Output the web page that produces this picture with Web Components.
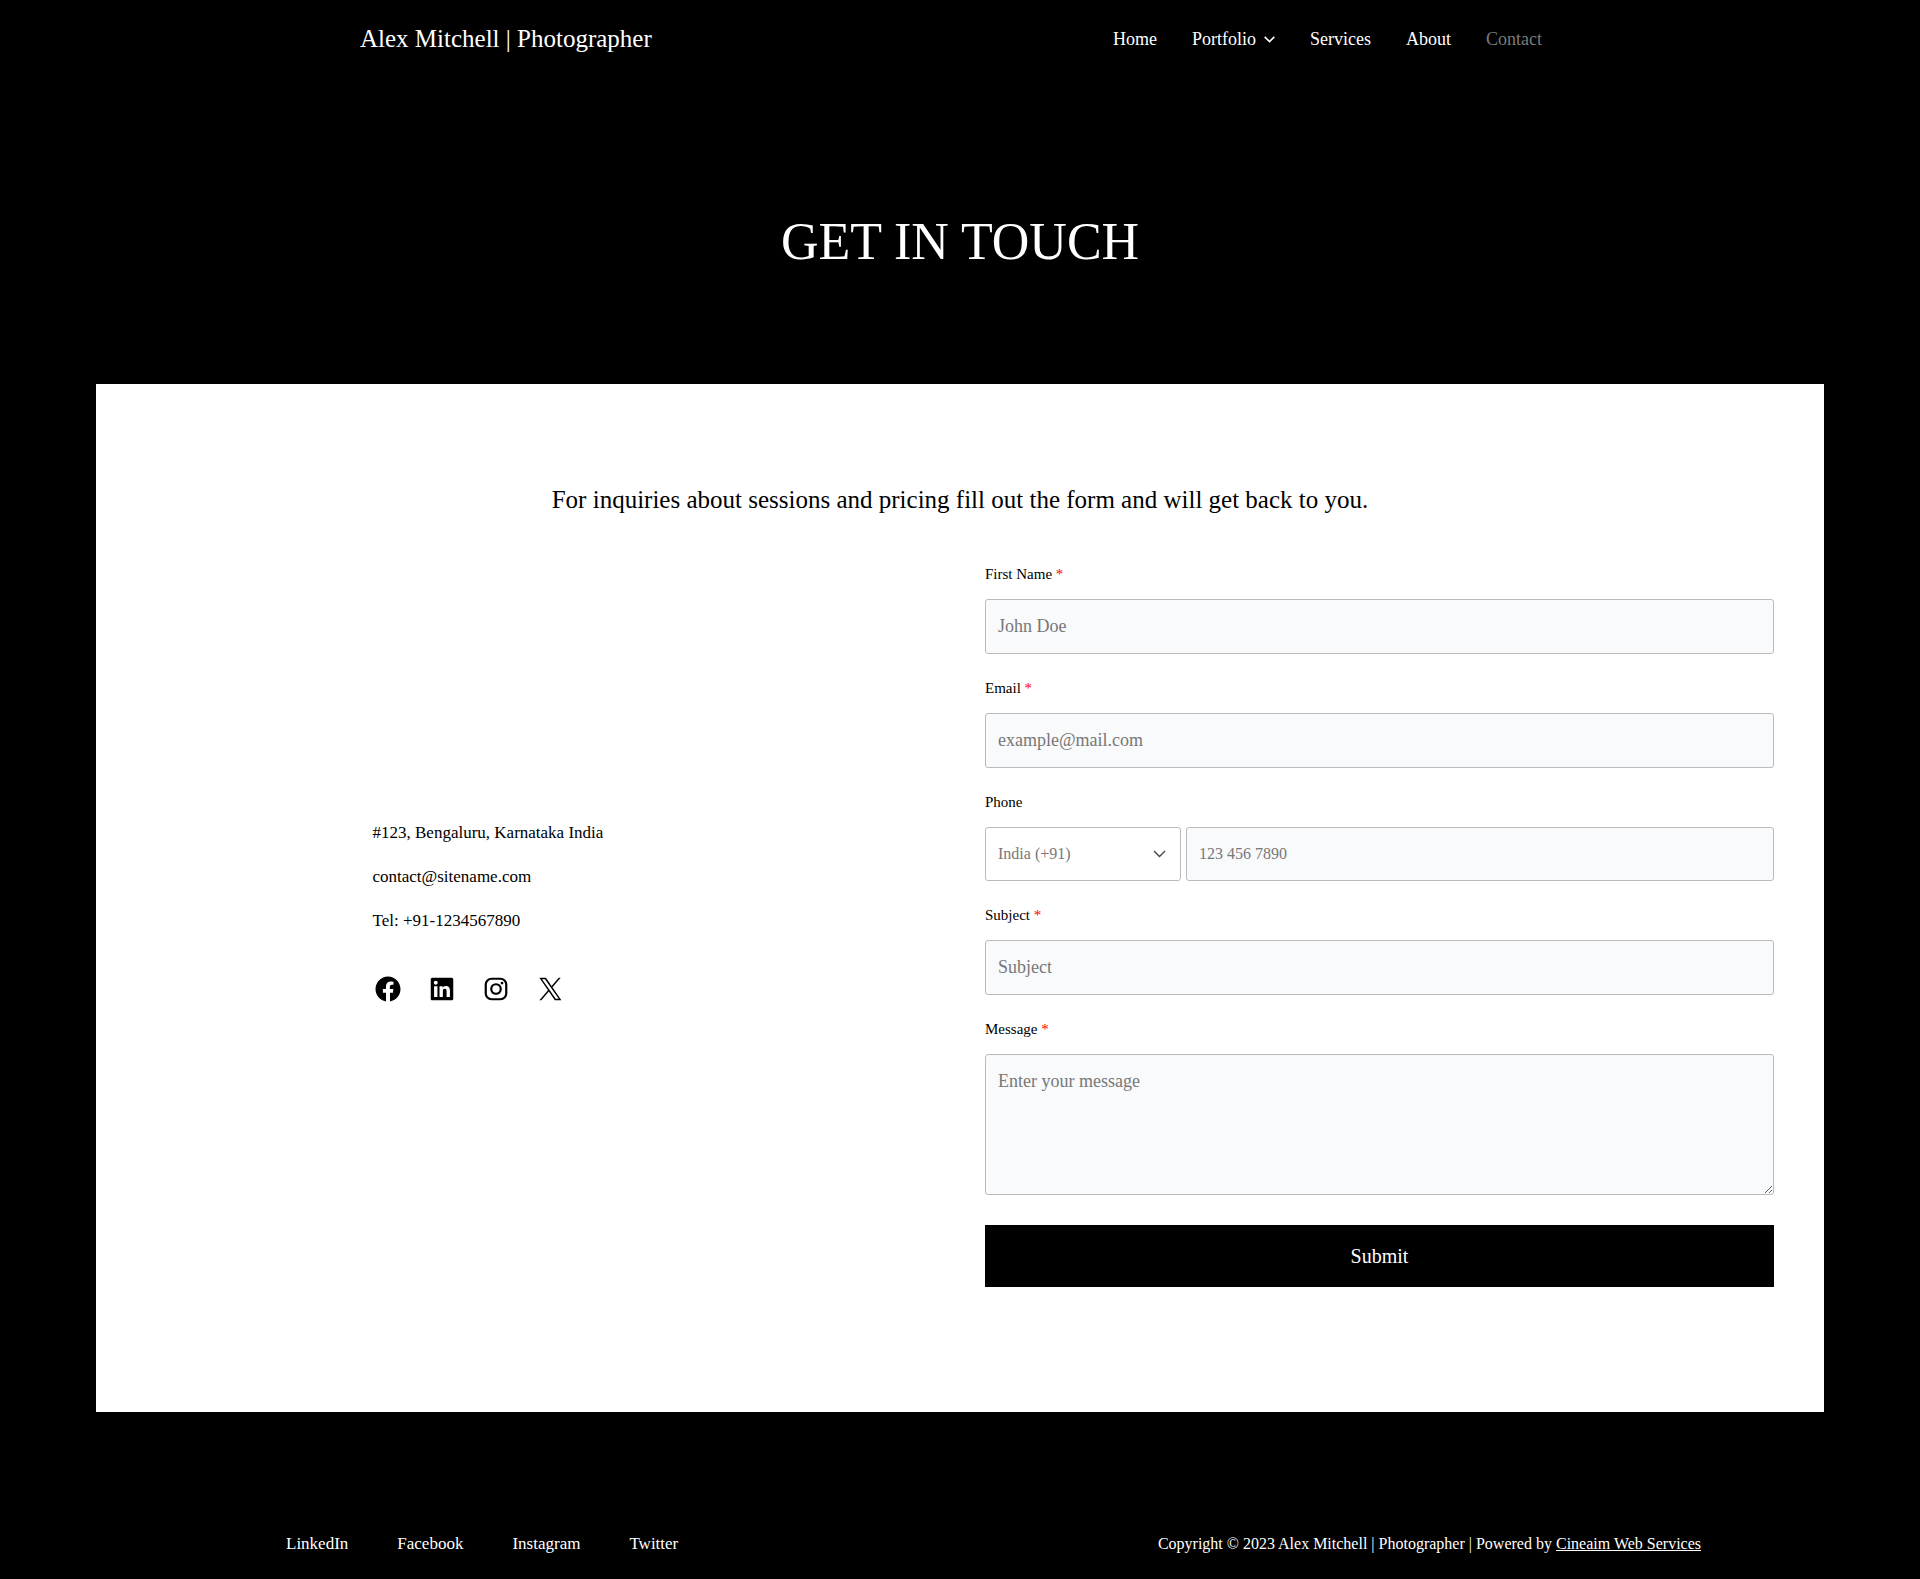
<!DOCTYPE html>
<html lang="en">
<head>
<meta charset="utf-8">
<meta name="viewport" content="width=device-width, initial-scale=1">
<title>Contact – Alex Mitchell | Photographer</title>
<style>
  body { margin: 0; background: #000; color: #000; font-family: "Liberation Serif", "Times New Roman", serif; font-size: 17px; line-height: 24px; }
</style>
</head>
<body>
<contact-page></contact-page>
<script>
const RESET = `*, *::before, *::after { box-sizing: border-box; } a { color: inherit; text-decoration: none; } svg { display: block; }`;

function define(name, css, html) {
  customElements.define(name, class extends HTMLElement {
    constructor() {
      super();
      this.attachShadow({ mode: 'open' }).innerHTML =
        `<style>${RESET}${css}</style>${typeof html === 'function' ? html(this) : html}`;
    }
  });
}

/* Navigation entry; "submenu" adds the chevron, "current" dims it */
define('nav-item', `
  :host { display: block; }
  a { display: flex; align-items: center; gap: 8px; }
  :host([current]) a { color: #7a7a7a; }
`, el => `<a href="#"><slot></slot>${el.hasAttribute('submenu')
  ? `<svg width="11" height="7" viewBox="0 0 11 7" fill="none" stroke="currentColor" stroke-width="1.6" aria-hidden="true"><path d="M.7.9 5.5 5.6 10.3.9"/></svg>` : ''}</a>`);

define('site-header', `
  :host { display: block; color: #fff; }
  header { display: flex; flex-wrap: wrap; align-items: center; justify-content: space-between; gap: 10px 35px;
    max-width: 1200px; min-height: 78px; margin: 0 auto; padding-right: 18px; }
  .brand { font-size: 25px; line-height: 32px; }
  nav { display: flex; flex-wrap: wrap; gap: 10px 35px; font-size: 18px; }
`, `<header>
  <a class="brand" href="#">Alex Mitchell | Photographer</a>
  <nav aria-label="Main">
    <nav-item>Home</nav-item><nav-item submenu>Portfolio</nav-item><nav-item>Services</nav-item><nav-item>About</nav-item><nav-item current>Contact</nav-item>
  </nav>
</header>`);

define('page-hero', `
  :host { display: block; padding: 134px 20px 112px; color: #fff; text-align: center; }
  h1 { margin: 0; font-size: 52px; line-height: 60px; font-weight: 400; text-transform: uppercase; }
`, `<h1><slot></slot></h1>`);

const ICONS = {
  facebook: `<path d="M12 2C6.5 2 2 6.5 2 12c0 5 3.7 9.1 8.4 9.9v-7H7.9V12h2.5V9.8c0-2.5 1.5-3.9 3.8-3.9 1.1 0 2.2.2 2.2.2v2.5h-1.3c-1.2 0-1.6.8-1.6 1.6V12h2.8l-.4 2.9h-2.3v7C18.3 21.1 22 17 22 12c0-5.5-4.5-10-10-10z"/>`,
  linkedin: `<path d="M19.7 3H4.3C3.582 3 3 3.582 3 4.3v15.4c0 .718.582 1.3 1.3 1.3h15.4c.718 0 1.3-.582 1.3-1.3V4.3c0-.718-.582-1.3-1.3-1.3zM8.339 18.338H5.667v-8.59h2.672v8.59zM7.004 8.574c-.857 0-1.549-.694-1.549-1.548 0-.855.691-1.548 1.549-1.548.854 0 1.547.694 1.547 1.548 0 .855-.693 1.548-1.547 1.548zm11.335 9.764h-2.669v-4.177c0-.996-.017-2.278-1.387-2.278-1.389 0-1.601 1.086-1.601 2.206v4.249h-2.667v-8.59h2.559v1.174h.037c.356-.675 1.227-1.387 2.526-1.387 2.703 0 3.203 1.779 3.203 4.092v4.711z"/>`,
  instagram: `<g fill="none" stroke="#000" stroke-width="1.75"><rect x="3.8" y="3.8" width="16.4" height="16.4" rx="4.6"/><circle cx="12" cy="12" r="3.8"/></g><circle cx="16.8" cy="7.2" r="1.1"/>`,
  x: `<path d="M13.982 10.622 20.54 3h-1.554l-5.693 6.618L8.745 3H3.5l6.876 10.007L3.5 21h1.554l6.012-6.989L15.868 21h5.245l-7.131-10.378Zm-2.128 2.474-.697-.997-5.543-7.93H8l4.474 6.4.697.996 5.815 8.318h-2.387l-4.745-6.787Z"/>`
};
define('social-link', `:host { display: block; }`, el =>
  `<a href="#" aria-label="${el.getAttribute('label')}"><svg width="30" height="30" viewBox="0 0 24 24" aria-hidden="true">${ICONS[el.getAttribute('icon')]}</svg></a>`);

define('contact-details', `
  :host { display: block; width: 100%; max-width: 336px; }
  address { display: grid; gap: 20px; font-style: normal; }
  .social { display: flex; gap: 24px; margin-top: 41px; }
`, `<address><span>#123, Bengaluru, Karnataka India</span><span>contact@sitename.com</span><span>Tel: +91-1234567890</span></address>
<div class="social">
  <social-link icon="facebook" label="Facebook"></social-link>
  <social-link icon="linkedin" label="LinkedIn"></social-link>
  <social-link icon="instagram" label="Instagram"></social-link>
  <social-link icon="x" label="X"></social-link>
</div>`);

/* Labelled control; type is text, email, phone or message */
define('form-field', `
  :host { display: block; }
  label { display: block; margin-bottom: 13px; font-size: 15px; line-height: 24px; }
  .req { color: #f00; }
  input, textarea, select { display: block; width: 100%; height: 55px; margin: 0; padding: 0 12px; border: 1px solid #bbb;
    border-radius: 3px; background: #f9fafc; color: #777; font: inherit; font-size: 18px; line-height: 24px; }
  ::placeholder { color: #777; opacity: 1; }
  textarea { height: 141px; padding: 14px 12px; resize: vertical; }
  .phone { display: grid; grid-template-columns: 196px 1fr; gap: 5px; }
  .phone input, .phone select { height: 54px; font-size: 16px; }
  .pick { display: grid; align-items: center; }
  .pick > * { grid-area: 1 / 1; }
  .pick svg { justify-self: end; margin-right: 15px; pointer-events: none; }
  select { appearance: none; background: #fff; }
`, el => {
  const type = el.getAttribute('type') || 'text';
  const hint = el.getAttribute('hint');
  const req = el.hasAttribute('required');
  const label = `<label for="f">${el.getAttribute('label')}${req ? ' <span class="req">*</span>' : ''}</label>`;
  const r = req ? 'required' : '';
  if (type === 'message') return `${label}<textarea id="f" placeholder="${hint}" ${r}></textarea>`;
  if (type === 'phone') return `${label}<div class="phone"><div class="pick">
    <select aria-label="Country code"><option>India (+91)</option></select>
    <svg width="13" height="8" viewBox="0 0 13 8" fill="none" stroke="#444" stroke-width="1.4" aria-hidden="true"><path d="M1 1l5.5 5.5L12 1"/></svg>
    </div><input id="f" type="tel" placeholder="${hint}"></div>`;
  return `${label}<input id="f" type="${type}" placeholder="${hint}" ${r}>`;
});

define('contact-form', `
  :host { display: block; }
  form { display: grid; gap: 22px; }
  button { margin: 8px 0 0; padding: 19px 20px; border: 0; background: #000; color: #fff; font: inherit; font-size: 20px; line-height: 24px; cursor: pointer; }
`, `<form>
  <form-field label="First Name" hint="John Doe" required></form-field>
  <form-field label="Email" type="email" hint="example@mail.com" required></form-field>
  <form-field label="Phone" type="phone" hint="123 456 7890"></form-field>
  <form-field label="Subject" hint="Subject" required></form-field>
  <form-field label="Message" type="message" hint="Enter your message" required></form-field>
  <button type="submit">Submit</button>
</form>`);

define('contact-card', `
  :host { display: block; margin: 0 5%; padding: 100px 50px 125px; background: #fff; }
  .lead { margin: 0 0 46px; font-size: 25px; line-height: 32px; text-align: center; }
  .cols { display: grid; grid-template-columns: 1fr 1fr; gap: 50px; }
  .side { display: flex; align-items: center; justify-content: center; padding-bottom: 25px; }
  @media (max-width: 900px) { .cols { grid-template-columns: 1fr; } }
`, `<p class="lead"><slot></slot></p>
<div class="cols"><div class="side"><contact-details></contact-details></div><contact-form></contact-form></div>`);

define('site-footer', `
  :host { display: block; padding: 117px 20px 20px; color: #fff; line-height: 30px; }
  footer { display: flex; flex-wrap: wrap; justify-content: space-between; gap: 10px 49px; max-width: 1482px; margin: 0 auto; padding-left: 67px; }
  nav { display: flex; flex-wrap: wrap; gap: 10px 49px; }
  p { margin: 0; font-size: 16px; }
  p a { text-decoration: underline; }
`, `<footer>
  <nav aria-label="Social"><a href="#">LinkedIn</a><a href="#">Facebook</a><a href="#">Instagram</a><a href="#">Twitter</a></nav>
  <p>Copyright © 2023 Alex Mitchell | Photographer | Powered by <a href="#">Cineaim Web Services</a></p>
</footer>`);

define('contact-page', `:host { display: block; } main { display: block; }`, `
<site-header></site-header>
<main>
  <page-hero>Get in touch</page-hero>
  <contact-card>For inquiries about sessions and pricing fill out the form and will get back to you.</contact-card>
</main>
<site-footer></site-footer>`);
</script>
</body>
</html>
